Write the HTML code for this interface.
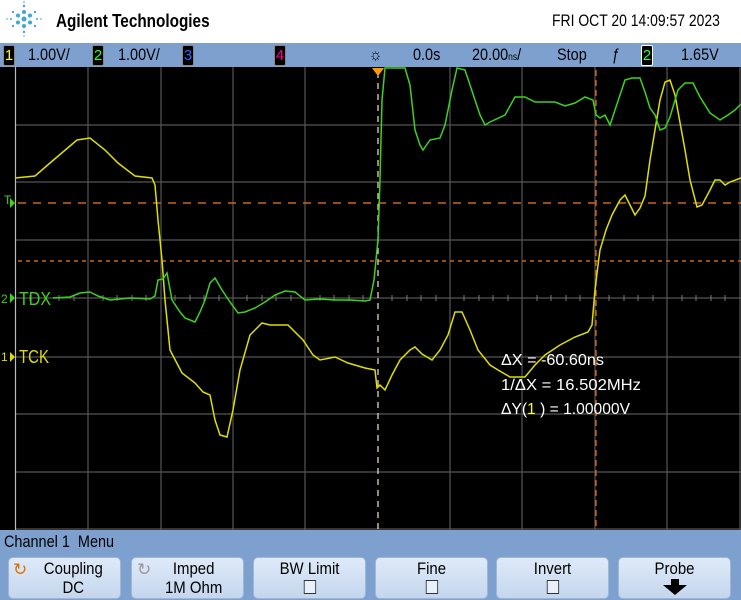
<!DOCTYPE html>
<html><head><style>
body{margin:0;width:741px;height:600px;overflow:hidden;background:#000;font-family:"Liberation Sans",sans-serif;position:relative}
.hdr{position:absolute;left:0;top:0;width:741px;height:43px;background:#fff}
.st{position:absolute;left:0;top:43px;width:741px;height:24px;background:#7ea0cf;font-size:17px;color:#000;white-space:nowrap}
.st span{position:absolute;top:2px;transform:scaleX(.85);transform-origin:left}
.cb{position:absolute;top:2px;width:10px;height:19px;background:#000;border-radius:2px;font-size:15px;line-height:19px;text-align:center}
.bot{position:absolute;left:0;top:530px;width:741px;height:70px;background:#7ea0cf}
.btn{position:absolute;top:27px;width:111px;height:40px;background:linear-gradient(#dfeaf8,#c4d6ee);border-radius:5px;border:1px solid #9fb6d6;font-size:17px;text-align:center;line-height:19px;color:#000;white-space:nowrap}
.btn .t{padding-top:1px;transform:scaleX(.88)}
.chk{display:inline-block;width:12px;height:12px;border:1px solid #333;background:#e8f0fa;margin-top:2px}
</style></head><body>
<div class="hdr">
<svg width="50" height="43" style="position:absolute;left:0;top:0">
<g fill="#3fa7d6">
<circle cx="24" cy="19" r="2.5"/>
<circle cx="24" cy="12" r="2"/><circle cx="24" cy="26" r="2"/><circle cx="18" cy="15.5" r="2"/><circle cx="30" cy="15.5" r="2"/><circle cx="18" cy="22.5" r="2"/><circle cx="30" cy="22.5" r="2"/>
<circle cx="24" cy="6" r="1.2"/><circle cx="24" cy="32" r="1.2"/><circle cx="13" cy="12" r="1.2"/><circle cx="35" cy="12" r="1.2"/><circle cx="13" cy="26" r="1.2"/><circle cx="35" cy="26" r="1.2"/>
<circle cx="11" cy="19" r="1"/><circle cx="37" cy="19" r="1"/><circle cx="7" cy="19" r=".8"/><circle cx="41" cy="19" r=".8"/><circle cx="24" cy="2" r=".8"/><circle cx="24" cy="36" r=".8"/>
</g></svg>
<div style="position:absolute;left:56px;top:11px;font-size:18px;font-weight:bold;transform:scaleX(.85);transform-origin:left;white-space:nowrap">Agilent Technologies</div>
<div style="position:absolute;left:552px;top:11px;font-size:17px;transform:scaleX(.82);transform-origin:left;white-space:nowrap">FRI OCT 20 14:09:57 2023</div>
</div>
<div class="st">
<div class="cb" style="left:3px;border:1px solid #888;color:#ff0">1</div><span style="left:28px">1.00V/</span>
<div class="cb" style="left:92px;border:1px solid #888;color:#3f3">2</div><span style="left:118px">1.00V/</span>
<div class="cb" style="left:182px;border:1px solid #888;color:#36f">3</div>
<div class="cb" style="left:274px;border:1px solid #888;color:#f09">4</div>
<span style="left:369px;font-size:17px">☼</span>
<span style="left:413px">0.0s</span><span style="left:472px">20.00<small style="font-size:10px">ns</small>/</span>
<span style="left:557px">Stop</span><span style="left:612px">ƒ</span>
<div class="cb" style="left:641px;border:1px solid #fff;color:#3f3">2</div><span style="left:681px">1.65V</span>
</div>
<svg width="741" height="463" style="position:absolute;left:0;top:67px" viewBox="0 67 741 463">
<g stroke="#555" stroke-width="1.2" fill="none">
<path d="M88 67V530M161 67V530M233 67V530M305 67V530M450 67V530M522 67V530M595 67V530M667 67V530M740 67V530"/>
<path d="M15 125H741M15 182H741M15 240H741M15 298H741M15 357H741M15 414H741M15 472H741M15 529H741"/>
</g>
<path d="M15.5 67V530" stroke="#bbb" stroke-width="1.2"/>
<g stroke="#777" stroke-width="1"><path d="M30 295v6M45 295v6M59 295v6M74 295v6M103 295v6M117 295v6M132 295v6M146 295v6M175 295v6M190 295v6M204 295v6M219 295v6M247 295v6M262 295v6M276 295v6M291 295v6M320 295v6M334 295v6M349 295v6M363 295v6M392 295v6M407 295v6M421 295v6M436 295v6M464 295v6M479 295v6M493 295v6M508 295v6M537 295v6M551 295v6M566 295v6M580 295v6M609 295v6M624 295v6M638 295v6M653 295v6M682 295v6M696 295v6M711 295v6M725 295v6"/></g>
<path d="M18 203H741" stroke="#c8661a" stroke-width="1.5" stroke-dasharray="8 7"/>
<path d="M18 261H741" stroke="#c8661a" stroke-width="1.5" stroke-dasharray="4 4"/>
<path d="M378 72V530" stroke="#e8d2b8" stroke-width="1.3" stroke-dasharray="6 5"/>
<path d="M596 70V530" stroke="#e06a10" stroke-width="1.3" stroke-dasharray="6 4"/>
<path d="M372 68h12l-6 8z" fill="#f90"/>
<polyline fill="none" stroke="#dede00" stroke-width="1.5" points="15,178 35,176 50,163 77,140 90,138 105,150 118,163 135,176 152,178 155,185 158,220 162,260 165,300 170,350 182,373 195,383 203,392 210,395 215,420 220,435 227,437 233,410 240,370 250,335 262,323 270,325 288,325 303,340 313,355 320,360 335,357 348,363 365,368 375,370 377,388 380,385 385,390 392,375 400,360 410,350 415,347 422,354 427,357 432,360 440,350 448,335 455,312 462,312 470,330 478,350 490,365 498,370 510,377 525,377 535,365 545,355 560,345 575,337 588,332 592,325 595,290 598,265 600,250 606,230 612,215 620,200 625,195 630,205 635,215 640,208 645,196 650,160 660,100 665,82 670,80 675,95 685,150 690,180 697,207 702,205 710,190 715,180 720,180 725,185 730,182 741,178"/>
<polyline fill="none" stroke="#3ed21e" stroke-width="1.5" points="53,298 70,297 80,293 90,292 98,296 110,300 130,298 150,299 155,296 158,280 163,279 167,273 172,300 180,312 185,318 195,322 200,312 205,300 210,283 215,278 222,290 230,302 238,313 245,312 255,308 265,302 275,295 285,291 295,292 305,300 320,299 335,300 350,300 365,301 370,300 374,280 378,240 380,180 382,100 385,68 405,68 410,85 415,130 420,145 423,150 430,140 440,138 445,125 452,90 457,68 465,70 475,100 480,115 485,125 490,122 505,115 515,97 525,97 535,102 555,102 565,106 575,103 585,97 593,100 596,115 600,118 605,115 610,125 615,110 625,80 632,78 640,78 645,92 650,108 655,115 660,130 665,128 670,117 678,90 685,83 693,83 700,97 710,113 720,120 728,115 735,110 741,104"/>
<text x="4" y="204" fill="#3ed21e" font-size="12" font-family="Liberation Sans">T</text><path d="M10 198l5 5-5 5z" fill="#3ed21e"/>
<text x="1" y="303" fill="#3ed21e" font-size="12" font-family="Liberation Sans">2</text><path d="M10 293l5 5-5 5z" fill="#3ed21e"/>
<text x="19" y="305" fill="#3ed21e" font-size="18" font-family="Liberation Sans" textLength="32" lengthAdjust="spacingAndGlyphs">TDX</text>
<text x="1" y="361" fill="#dede00" font-size="12" font-family="Liberation Sans">1</text><path d="M10 352l5 5-5 5z" fill="#dede00"/>
<text x="19" y="363" fill="#dede00" font-size="18" font-family="Liberation Sans" textLength="30" lengthAdjust="spacingAndGlyphs">TCK</text>
<g fill="#fff" font-size="16" font-family="Liberation Sans">
<text x="501" y="365" textLength="103" lengthAdjust="spacingAndGlyphs">ΔX = -60.60ns</text>
<text x="501" y="390" textLength="140" lengthAdjust="spacingAndGlyphs">1/ΔX = 16.502MHz</text>
<text x="501" y="414" textLength="129" lengthAdjust="spacingAndGlyphs">ΔY(<tspan fill="#ff0">1</tspan> ) = 1.00000V</text>
</g>
</svg>
<div class="bot">
<div style="position:absolute;left:4px;top:2px;font-size:17px;transform:scaleX(.85);transform-origin:left;white-space:nowrap">Channel 1&nbsp; Menu</div>
<div class="btn" style="left:8px"><div class="t" style="padding-left:20px">Coupling<br>DC</div><span style="position:absolute;left:4px;top:2px;color:#e07000;font-size:17px">↻</span></div>
<div class="btn" style="left:131px"><div class="t" style="padding-left:14px">Imped<br>1M Ohm</div><span style="position:absolute;left:5px;top:2px;color:#999;font-size:17px">↻</span></div>
<div class="btn" style="left:253px"><div class="t">BW Limit<br><span class="chk"></span></div></div>
<div class="btn" style="left:375px"><div class="t">Fine<br><span class="chk"></span></div></div>
<div class="btn" style="left:496px"><div class="t">Invert<br><span class="chk"></span></div></div>
<div class="btn" style="left:618px"><div class="t">Probe</div><svg width="26" height="16" style="position:absolute;left:43px;top:21px"><path d="M9 0h8v6h8L13 16 1 6h8z" fill="#000"/></svg></div>
</div>
</body></html>
